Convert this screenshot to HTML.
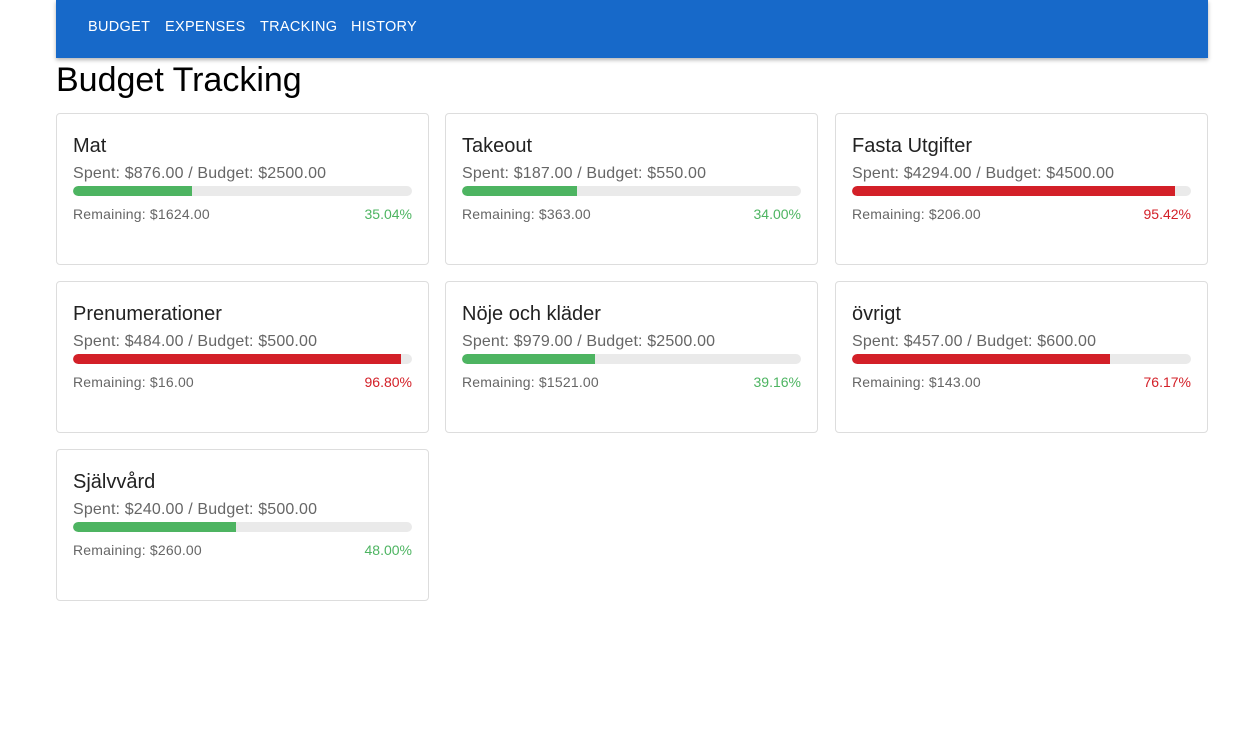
<!DOCTYPE html>
<html><head><style>
body{margin:0;background:#fff;font-family:"Liberation Sans",Arial,sans-serif;}
.bar{position:absolute;left:56px;top:0;width:1152px;height:58px;background:#1769c9;box-shadow:0 2px 4px rgba(0,0,0,.3);}
.bar span{position:absolute;top:19px;color:#fff;font-size:14.5px;letter-spacing:.3px;}
h1{position:absolute;left:56px;top:61px;margin:0;font-weight:400;font-size:34px;color:#000;}
.card{position:absolute;width:371px;height:150px;border:1px solid #ddd;border-radius:4px;box-sizing:content-box;}
.t{position:absolute;left:16px;top:21px;font-size:20px;color:#222;}
.s{position:absolute;left:16px;top:51px;font-size:16px;color:#666;letter-spacing:.15px;}
.p{position:absolute;left:16px;top:72px;width:339px;height:10px;border-radius:5px;background:#eaeaea;overflow:hidden;}
.p div{height:100%;border-radius:5px 0 0 5px;}
.r{position:absolute;left:16px;top:92px;font-size:14px;color:#666;letter-spacing:.2px;}
.c{position:absolute;right:16px;top:92px;font-size:14px;}
.g{background:#4db461}.gr{color:#4db461}.d{background:#d32028}.dr{color:#d32028}
</style></head><body>
<div class="bar"><span style="left:32px">BUDGET</span><span style="left:109px">EXPENSES</span><span style="left:204px">TRACKING</span><span style="left:295px">HISTORY</span></div>
<h1>Budget Tracking</h1>
<div class="card" style="left:56px;top:113px"><div class="t">Mat</div><div class="s">Spent: $876.00 / Budget: $2500.00</div><div class="p"><div class="g" style="width:35.04%"></div></div><div class="r">Remaining: $1624.00</div><div class="c gr">35.04%</div></div>
<div class="card" style="left:445px;top:113px"><div class="t">Takeout</div><div class="s">Spent: $187.00 / Budget: $550.00</div><div class="p"><div class="g" style="width:34%"></div></div><div class="r">Remaining: $363.00</div><div class="c gr">34.00%</div></div>
<div class="card" style="left:835px;top:113px"><div class="t">Fasta Utgifter</div><div class="s">Spent: $4294.00 / Budget: $4500.00</div><div class="p"><div class="d" style="width:95.42%"></div></div><div class="r">Remaining: $206.00</div><div class="c dr">95.42%</div></div>
<div class="card" style="left:56px;top:281px"><div class="t">Prenumerationer</div><div class="s">Spent: $484.00 / Budget: $500.00</div><div class="p"><div class="d" style="width:96.8%"></div></div><div class="r">Remaining: $16.00</div><div class="c dr">96.80%</div></div>
<div class="card" style="left:445px;top:281px"><div class="t">Nöje och kläder</div><div class="s">Spent: $979.00 / Budget: $2500.00</div><div class="p"><div class="g" style="width:39.16%"></div></div><div class="r">Remaining: $1521.00</div><div class="c gr">39.16%</div></div>
<div class="card" style="left:835px;top:281px"><div class="t">övrigt</div><div class="s">Spent: $457.00 / Budget: $600.00</div><div class="p"><div class="d" style="width:76.17%"></div></div><div class="r">Remaining: $143.00</div><div class="c dr">76.17%</div></div>
<div class="card" style="left:56px;top:449px"><div class="t">Självvård</div><div class="s">Spent: $240.00 / Budget: $500.00</div><div class="p"><div class="g" style="width:48%"></div></div><div class="r">Remaining: $260.00</div><div class="c gr">48.00%</div></div>
</body></html>
